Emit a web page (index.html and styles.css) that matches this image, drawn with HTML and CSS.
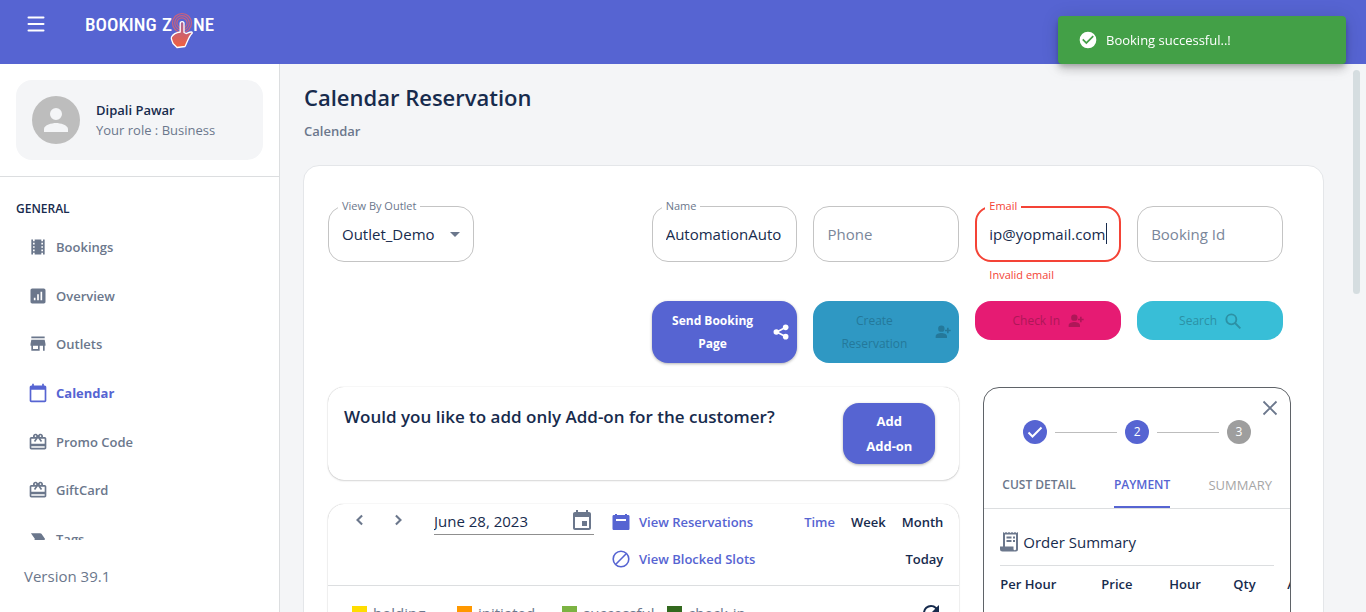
FILE: index.html
```html
<!DOCTYPE html>
<html lang="en">
<head>
<meta charset="utf-8">
<meta name="viewport" content="width=device-width, initial-scale=1">
<title>Calendar Reservation - Booking Zone</title>
<link rel="stylesheet" href="styles.css">
</head>
<body class="app">
<header class="topbar">
  <button class="icon-btn menu-btn" type="button" aria-label="Menu">
    <svg width="24" height="24" viewBox="0 0 24 24"><path d="M4.500 5.500h15M4.500 12h15M4.500 18.500h15" fill="none" stroke="#fff" stroke-width="2" stroke-linecap="round"/></svg>
  </button>
  <a class="logo" href="#" aria-label="Booking Zone">
    <svg width="130" height="38" viewBox="0 0 130 38">
      <defs><linearGradient id="hand" x1="0" y1="0" x2="0" y2="1"><stop offset="0" stop-color="#a8629a"/><stop offset="1" stop-color="#f4603c"/></linearGradient></defs>
      <text class="logo-text" x="0" y="19">BOOKING</text>
      <text class="logo-text" x="77" y="19">Z</text>
      <text class="logo-text" x="108" y="19">NE</text>
      <g fill="none" stroke="#c9617c" stroke-width="1.200"><circle cx="97" cy="11" r="9.500"/><circle cx="97" cy="11" r="7.300"/><circle cx="97" cy="11" r="5.100"/></g>
      <path d="M95.200 11.500a1.900 1.900 0 0 1 3.800 0V20.500L101 21.500C103 21 104 19.800 106.500 20C107.500 20.200 107.500 21.200 106.500 22C103.500 25 102.500 30 100 34.500L92 35.500L88 31.500C87.500 29 85.500 27 86.500 25C88.500 21.500 91 20.500 95.200 20Z" fill="url(#hand)" stroke="#fff" stroke-width="1.300" stroke-linejoin="round"/>
    </svg>
  </a>
</header>

<div class="layout">
  <aside class="sidebar">
    <div class="profile">
      <svg class="avatar" width="48" height="48" viewBox="0 0 48 48"><circle cx="24" cy="24" r="24" fill="#bdbdbd"/><path d="M24 24a6 6 0 1 0 0-12 6 6 0 0 0 0 12zm0 3c-4 0-12 2-12 6v3h24v-3c0-4-8-6-12-6z" fill="#f4f5f7"/></svg>
      <div>
        <div class="profile-name">Dipali Pawar</div>
        <div class="profile-role">Your role : Business</div>
      </div>
    </div>
    <nav class="nav" aria-label="General">
      <h2 class="nav-title">GENERAL</h2>
      <ul class="nav-list">
        <li><a class="nav-link" href="#"><svg class="ico" viewBox="0 0 24 24"><path d="M18 3v2h-2V3H8v2H6V3H4v18h2v-2h2v2h8v-2h2v2h2V3h-2zM8 17H6v-2h2v2zm0-4H6v-2h2v2zm0-4H6V7h2v2zm10 8h-2v-2h2v2zm0-4h-2v-2h2v2zm0-4h-2V7h2v2z"/></svg>Bookings</a></li>
        <li><a class="nav-link" href="#"><svg class="ico" viewBox="0 0 24 24"><path fill-rule="evenodd" d="M19 3H5c-1.100 0-2 .9-2 2v14c0 1.100.9 2 2 2h14c1.100 0 2-.9 2-2V5c0-1.100-.9-2-2-2zM9 17H7v-3h2v3zm4 0h-2v-7h2v7zm4 0h-2V7h2v10z"/></svg>Overview</a></li>
        <li><a class="nav-link" href="#"><svg class="ico" viewBox="0 0 24 24"><path d="M20 3H4v2h16V3zm1 11v-2l-1-5H4l-1 5v2h1v6h10v-6h4v6h2v-6h1zm-9 4H6v-4h6v4z"/></svg>Outlets</a></li>
        <li><a class="nav-link nav-link-active" href="#" aria-current="page"><svg class="ico" viewBox="0 0 24 24"><path d="M20 3h-1V1h-2v2H7V1H5v2H4c-1.100 0-2 .9-2 2v16c0 1.100.9 2 2 2h16c1.100 0 2-.9 2-2V5c0-1.100-.9-2-2-2zm0 18H4V8h16v13z"/></svg>Calendar</a></li>
        <li><a class="nav-link" href="#"><svg class="ico" viewBox="0 0 24 24"><use href="#gift"/></svg>Promo Code</a></li>
        <li><a class="nav-link" href="#"><svg class="ico" viewBox="0 0 24 24"><path id="gift" d="M20 6h-2.180c.11-.31.18-.65.18-1 0-1.660-1.340-3-3-3-1.050 0-1.960.54-2.500 1.350l-.5.67-.5-.68C10.960 2.540 10.050 2 9 2 7.340 2 6 3.340 6 5c0 .35.07.69.18 1H4c-1.110 0-1.990.89-1.990 2L2 19c0 1.110.89 2 2 2h16c1.110 0 2-.89 2-2V8c0-1.110-.89-2-2-2zm-5-2c.55 0 1 .45 1 1s-.45 1-1 1-1-.45-1-1 .45-1 1-1zM9 4c.55 0 1 .45 1 1s-.45 1-1 1-1-.45-1-1 .45-1 1-1zm11 15H4v-2h16v2zm0-5H4V8h5.080L7 10.830 8.620 12 11 8.760l1-1.360 1 1.360L15.380 12 17 10.830 14.920 8H20v6z"/></svg>GiftCard</a></li>
        <li><a class="nav-link" href="#"><svg class="ico" viewBox="0 0 24 24"><path d="M3.500 19h11c.67 0 1.270-.33 1.630-.84L20.500 12l-4.370-6.160C15.770 5.330 15.170 5 14.500 5h-11l4.840 7-4.840 7z"/></svg>Tags</a></li>
      </ul>
    </nav>
    <div class="version">Version 39.1</div>
  </aside>

  <main class="main">
    <h1 class="page-title">Calendar Reservation</h1>
    <div class="crumb">Calendar</div>

    <section class="panel">
      <form class="filters">
        <div class="field">
          <select class="control" id="outlet"><option>Outlet_Demo</option></select>
          <label class="float-label" for="outlet">View By Outlet</label>
          <svg class="caret-down" width="24" height="24" viewBox="0 0 24 24"><path d="M7 10l5 5 5-5z" fill="#6b778c"/></svg>
        </div>
        <div class="field field-name">
          <input class="control" id="name" type="text" value="AutomationAuto">
          <label class="float-label" for="name">Name</label>
        </div>
        <div class="field"><input class="control" type="text" placeholder="Phone" aria-label="Phone"></div>
        <div class="field field-error">
          <input class="control" id="email" type="text" value="ip@yopmail.com" aria-describedby="email-help" aria-invalid="true">
          <label class="float-label" for="email">Email</label>
          <span class="text-cursor"></span>
          <div class="help" id="email-help">Invalid email</div>
        </div>
        <div class="field"><input class="control" type="text" placeholder="Booking Id" aria-label="Booking Id"></div>

        <button class="btn btn-primary btn-tall btn-send" type="button"><span class="btn-label">Send Booking Page</span><svg width="16" height="16" viewBox="0 0 24 24" fill="currentColor"><path d="M18 5.500 5.500 12 18 18.500" fill="none" stroke="currentColor" stroke-width="2.500"/><circle cx="5" cy="12" r="4.200"/><circle cx="19" cy="5" r="4.200"/><circle cx="19" cy="19" r="4.200"/></svg></button>
        <button class="btn btn-tall btn-create" type="button" disabled><span class="btn-label">Create Reservation</span><svg width="16" height="16" viewBox="0 0 24 24" fill="currentColor"><g id="person-add"><circle cx="9.500" cy="7" r="4.800"/><path d="M1 21v-2.500C1 15 6 13.500 9.500 13.500s8.500 1.500 8.500 5V21zM18 14v-3h-3V8.500h3v-3h2.500v3h3V11h-3v3z"/></g></svg></button>
        <button class="btn btn-checkin" type="button" disabled><span>Check In</span><svg width="16" height="16" viewBox="0 0 24 24" fill="currentColor"><use href="#person-add"/></svg></button>
        <button class="btn btn-search" type="button" disabled><span>Search</span><svg width="16" height="16" viewBox="0 0 24 24" fill="none" stroke="currentColor" stroke-width="2.800"><circle cx="9.500" cy="9.500" r="7.500"/><path d="m15 15 8 8"/></svg></button>
      </form>

      <div class="columns">
        <div class="col-left">
          <section class="card addon">
            <h2 class="addon-title">Would you like to add only Add-on for the customer?</h2>
            <button class="btn btn-primary btn-addon" type="button">Add<br>Add-on</button>
          </section>

          <section class="card">
            <div class="toolbar">
              <div class="pager">
                <button class="icon-btn" type="button" aria-label="Previous day"><svg width="20" height="20" viewBox="0 0 24 24"><path d="m14.500 6.500-5.500 5.500 5.500 5.500" fill="none" stroke="#6b778c" stroke-width="2.500"/></svg></button>
                <button class="icon-btn" type="button" aria-label="Next day"><svg width="20" height="20" viewBox="0 0 24 24"><path d="m9.500 6.500 5.500 5.500-5.500 5.500" fill="none" stroke="#6b778c" stroke-width="2.500"/></svg></button>
              </div>
              <div class="date">
                <input class="date-input" type="text" value="June 28, 2023" aria-label="Date">
                <svg width="24" height="24" viewBox="0 0 24 24" fill="#6b778c"><path d="M17 12h-5v5h5v-5zM16 1v2H8V1H6v2H5c-1.110 0-2 .9-2 2v14c0 1.100.89 2 2 2h14c1.100 0 2-.9 2-2V5c0-1.100-.9-2-2-2h-1V1h-2zm3 18H5V8h14v11z"/></svg>
              </div>
              <div class="view-links">
                <a class="view-link" href="#"><svg width="18" height="18" viewBox="0 0 18 18"><path fill-rule="evenodd" d="M3 1h2v1h8V1h2v1h1c1 0 1.500.5 1.500 1.500v12c0 1-.5 1.500-1.500 1.500H2c-1 0-1.500-.5-1.500-1.500v-12C.5 2.500 1 2 2 2h1zM4 6v2h10V6z" fill="#5664d2"/></svg>View Reservations</a>
                <a class="view-link" href="#"><svg width="18" height="18" viewBox="0 0 18 18" fill="none" stroke="#5664d2" stroke-width="1.600"><circle cx="9" cy="9" r="7.800"/><path d="M3.800 14.200 14.200 3.800"/></svg>View Blocked Slots</a>
              </div>
              <div class="ranges">
                <button class="range range-active" type="button">Time</button>
                <button class="range" type="button">Week</button>
                <button class="range" type="button">Month</button>
                <button class="range" type="button">Today</button>
              </div>
            </div>
            <div class="legend">
              <span class="key"><i class="swatch holding"></i>holding</span>
              <span class="key"><i class="swatch initiated"></i>initiated</span>
              <span class="key"><i class="swatch successful"></i>successful</span>
              <span class="key"><i class="swatch checkin"></i>check-in</span>
              <button class="icon-btn refresh" type="button" aria-label="Refresh"><svg width="24" height="24" viewBox="0 0 24 24"><path d="M17.650 6.350A7.958 7.958 0 0 0 12 4a8 8 0 1 0 7.730 10h-2.080A6 6 0 1 1 12 6c1.660 0 3.140.69 4.220 1.780L13 11h7V4z" fill="#172b4d"/></svg></button>
            </div>
          </section>
        </div>

        <section class="order">
          <button class="icon-btn close" type="button" aria-label="Close"><svg width="16" height="16" viewBox="0 0 16 16"><path d="m1.500 1.500 13 13m0-13-13 13" stroke="#6b778c" stroke-width="1.800"/></svg></button>
          <ol class="stepper">
            <li class="step"><svg width="16" height="16" viewBox="0 0 16 16" aria-label="Done"><path d="m1.500 8.500 4 4 9-9" fill="none" stroke="#fff" stroke-width="2"/></svg></li>
            <li class="step-line"></li>
            <li class="step">2</li>
            <li class="step-line"></li>
            <li class="step step-todo">3</li>
          </ol>
          <div class="tabs" role="tablist">
            <button class="tab" type="button" role="tab">CUST DETAIL</button>
            <button class="tab tab-active" type="button" role="tab" aria-selected="true">PAYMENT</button>
            <button class="tab tab-disabled" type="button" role="tab" disabled>SUMMARY</button>
          </div>
          <div class="summary">
            <h3 class="summary-title"><svg width="20" height="22" viewBox="0 0 20 22"><path fill-rule="evenodd" d="M3 1l1.500 1L6 1l1.500 1L9 1l1.500 1L12 1l1.500 1L15 1l1.500 1L18 1v17.500a2 2 0 0 1-2 2H2.500a2.500 2.500 0 0 1-2.500-2.500V15.500H3zm2 2.500v12h8.500v2.500a1.200 1.200 0 0 0 2.500 0V3.500z" fill="#6b778c"/><path d="M6.500 6.500h5M6.500 10h5M13 6.500h2M13 10h2" stroke="#6b778c" stroke-width="1.800"/></svg>Order Summary</h3>
            <table class="order-table">
              <thead><tr><th class="c-item">Per Hour</th><th class="c-price">Price</th><th class="c-hour">Hour</th><th class="c-qty">Qty</th><th>Amount</th></tr></thead>
            </table>
          </div>
        </section>
      </div>
    </section>
    <div class="scroll-thumb"></div>
  </main>
</div>

<div class="toast" role="status">
  <svg width="20" height="20" viewBox="0 0 24 24"><path d="M12 2a10 10 0 1 0 0 20 10 10 0 0 0 0-20zm-2 15-5-5 1.400-1.400 3.600 3.600 7.600-7.600L19 8z" fill="#fff"/></svg>
  Booking successful..!
</div>
</body>
</html>
```

FILE: styles.css
```css
* { box-sizing: border-box; }
.app {
  margin: 0;
  height: 100vh;
  display: flex;
  flex-direction: column;
  overflow: hidden;
  background: #f4f5f7;
  color: #172b4d;
  font-family: "Open Sans", "Noto Sans", sans-serif;
  font-size: 13px;
  line-height: 20px;
}
button, input, select { font: inherit; color: inherit; }
svg { flex: none; display: block; }
.icon-btn { border: 0; padding: 0; background: none; display: inline-flex; cursor: pointer; }

/* Top bar */
.topbar {
  flex: none;
  height: 64px;
  padding: 12px 24px;
  display: flex;
  align-items: flex-start;
  gap: 37px;
  background: #5664d2;
}
.logo-text { font: 500 19px "Roboto Condensed", "Open Sans Condensed", "Liberation Sans Narrow", sans-serif; fill: #fff; }

.layout { flex: 1; min-height: 0; display: flex; }

/* Sidebar */
.sidebar {
  flex: none;
  width: 280px;
  display: flex;
  flex-direction: column;
  background: #fff;
  border-right: 1px solid #dcdee0;
}
.profile {
  margin: 16px;
  padding: 16px;
  display: flex;
  align-items: center;
  gap: 16px;
  border-radius: 16px;
  background: #f4f5f7;
}
.profile-name { font-weight: 600; }
.profile-role { color: #6b778c; }
.nav { flex: 1; min-height: 0; overflow: hidden; border-top: 1px solid #dcdee0; padding: 22px 16px 0; }
.nav-title { margin: 0 0 4px; font-size: 12px; font-weight: 600; }
.nav-list { margin: 0; padding: 0 12px; list-style: none; display: grid; grid-auto-rows: 1fr; min-height: 340px; align-items: center; }
.nav-link { display: flex; align-items: center; gap: 8px; color: #6b778c; font-weight: 600; text-decoration: none; }
.nav-link-active { color: #5664d2; font-weight: 700; }
.ico { width: 20px; height: 20px; fill: currentColor; }
.version { padding: 24px; color: #6b778c; font-size: 15px; line-height: 24px; }

/* Main */
.main { flex: 1; min-width: 0; position: relative; overflow: hidden; padding: 17px 42px 0 23px; }
.page-title { margin: 0 1px; font-size: 22px; line-height: 32px; font-weight: 600; }
.crumb { margin: 8px 1px 24px; color: #6b778c; font-weight: 600; }
.scroll-thumb { position: absolute; top: 6px; right: 6px; width: 7px; height: 224px; border-radius: 4px; background: #d5dde0; }
.panel { padding: 40px 32px 0 24px; background: #fff; border: 1px solid #e4e6e9; border-radius: 16px; min-height: 600px; }

.filters { display: grid; grid-template-columns: repeat(6, 1fr); column-gap: 16px; margin-right: 8px; align-items: start; }
.field { position: relative; min-height: 95px; }
.field-name, .btn-send { grid-column-start: 3; }
.control {
  display: block;
  width: 100%;
  height: 56px;
  padding: 0 13px;
  border: 1px solid #c4c4c4;
  border-radius: 16px;
  background: #fff;
  font-size: 15px;
  outline: 0;
  appearance: none;
}
.control::placeholder { color: #7a869a; opacity: 1; }
.float-label { position: absolute; top: -8px; left: 10px; padding: 0 4px; background: #fff; color: #6b778c; font-size: 11px; line-height: 16px; }
.caret-down { position: absolute; right: 7px; top: 16px; pointer-events: none; }
.field-error .control { border: 2px solid #f44336; padding: 0 12px; }
.field-error .float-label, .help { color: #f44336; }
.help { padding: 5px 14px 0; font-size: 11px; line-height: 16px; }
.text-cursor { position: absolute; right: 14px; top: 17px; width: 1px; height: 21px; background: #172b4d; }

.btn {
  display: flex;
  align-items: center;
  justify-content: center;
  gap: 8px;
  border: 0;
  border-radius: 16px;
  padding: 8px;
  font-size: 12px;
  line-height: 23px;
}
.btn-label { flex: 1; padding: 0 8px; }
.btn-primary { background: #5664d2; color: #fff; font-weight: 700; box-shadow: 0 1px 3px rgba(0,0,0,.3); }
.btn-tall { min-height: 61px; }
.btn-create { background: #2f98c3; color: #24789a; }
.btn-checkin { background: #e61b73; color: #ae1758; }
.btn-search { background: #38bed7; color: #2c91a5; }

/* Lower columns */
.columns { margin-top: 24px; display: grid; grid-template-columns: 632fr 308fr; gap: 24px; align-items: start; }
.col-left { min-width: 0; display: grid; gap: 24px; }
.card { border-radius: 16px; background: #fff; box-shadow: 0 0 1px rgba(0,0,0,.3), 0 1px 2px rgba(0,0,0,.14); }
.addon { display: flex; justify-content: space-between; align-items: flex-start; padding: 16px 24px 16px 16px; }
.addon-title { margin: 2px 0 0; font-size: 17px; line-height: 24px; font-weight: 600; }
.btn-addon { width: 92px; min-height: 61px; padding: 5px; font-size: 13px; line-height: 25px; }

.toolbar { display: grid; grid-template-columns: 106px 160px 1fr auto; align-items: start; padding: 3px 16px 16px 0; border-bottom: 1px solid #dcdee0; }
.pager { display: flex; gap: 18px; padding: 3px 0 0 22px; }
.date { display: flex; align-items: center; height: 28px; border-bottom: 1px solid #8f8f8f; }
.date-input { flex: 1; min-width: 0; width: 0; border: 0; padding: 0; background: none; font-size: 15px; outline: 0; }
.view-links { display: grid; gap: 17px; padding: 5px 0 0 18px; }
.view-link { display: flex; align-items: center; gap: 9px; color: #5664d2; font-weight: 600; text-decoration: none; }
.ranges { display: flex; flex-wrap: wrap; justify-content: flex-end; gap: 17px 16px; width: 160px; padding-top: 5px; }
.range { border: 0; padding: 0; background: none; font-weight: 600; }
.range-active { color: #5664d2; }
.legend { display: flex; align-items: center; padding: 15px 16px 16px 24px; color: #6b778c; font-size: 15px; line-height: 24px; }
.key { display: flex; align-items: center; gap: 6px; flex: none; width: 105px; }
.swatch { width: 15px; height: 15px; }
.holding { background: #fd0; }
.initiated { background: #ff9800; }
.successful { background: #7cb342; }
.checkin { background: #33691e; }
.refresh { margin-left: auto; }

/* Order card */
.order { position: relative; min-width: 0; min-height: 400px; overflow: hidden; border: 1px solid #5f6368; border-radius: 16px; background: #fff; }
.close { position: absolute; top: 12px; right: 12px; }
.stepper { margin: 0; padding: 32px 39px 0; list-style: none; display: flex; align-items: center; gap: 8px; }
.step { flex: none; width: 24px; height: 24px; display: grid; place-items: center; border-radius: 50%; background: #5664d2; color: #fff; font-size: 12px; }
.step-todo { background: #9e9e9e; }
.step-line { flex: 1; height: 1px; background: #bdbdbd; }
.tabs { display: flex; justify-content: space-between; padding: 16px 18px 0; border-bottom: 1px solid #dcdee0; }
.tab { border: 0; border-bottom: 2px solid transparent; padding: 15px 0 11px; background: none; color: #6b778c; font-size: 12px; font-weight: 600; }
.tab-active { color: #5664d2; border-color: #5664d2; }
.tab-disabled { color: #a6a6a6; font-size: 13px; font-weight: 400; }
.summary { padding: 20px 16px 0; }
.summary-title { display: flex; align-items: center; gap: 3px; margin: 0; padding-bottom: 10px; border-bottom: 1px solid #dcdee0; font-size: 15px; line-height: 26px; font-weight: 400; }
.order-table { table-layout: fixed; width: 360px; border-collapse: collapse; }
.order-table th { padding: 8px 0; text-align: left; font-weight: 600; }
.c-item { width: 101px; }
.c-price { width: 68px; }
.c-hour { width: 64px; }
.c-qty { width: 54px; }

/* Toast */
.toast {
  position: fixed;
  top: 16px;
  right: 20px;
  width: 288px;
  min-height: 48px;
  padding: 6px 20px;
  display: flex;
  align-items: center;
  gap: 8px;
  border-radius: 4px;
  background: #43a047;
  color: #fff;
  box-shadow: 0 3px 5px -1px rgba(0,0,0,.2), 0 6px 10px rgba(0,0,0,.14), 0 1px 18px rgba(0,0,0,.12);
}
```
